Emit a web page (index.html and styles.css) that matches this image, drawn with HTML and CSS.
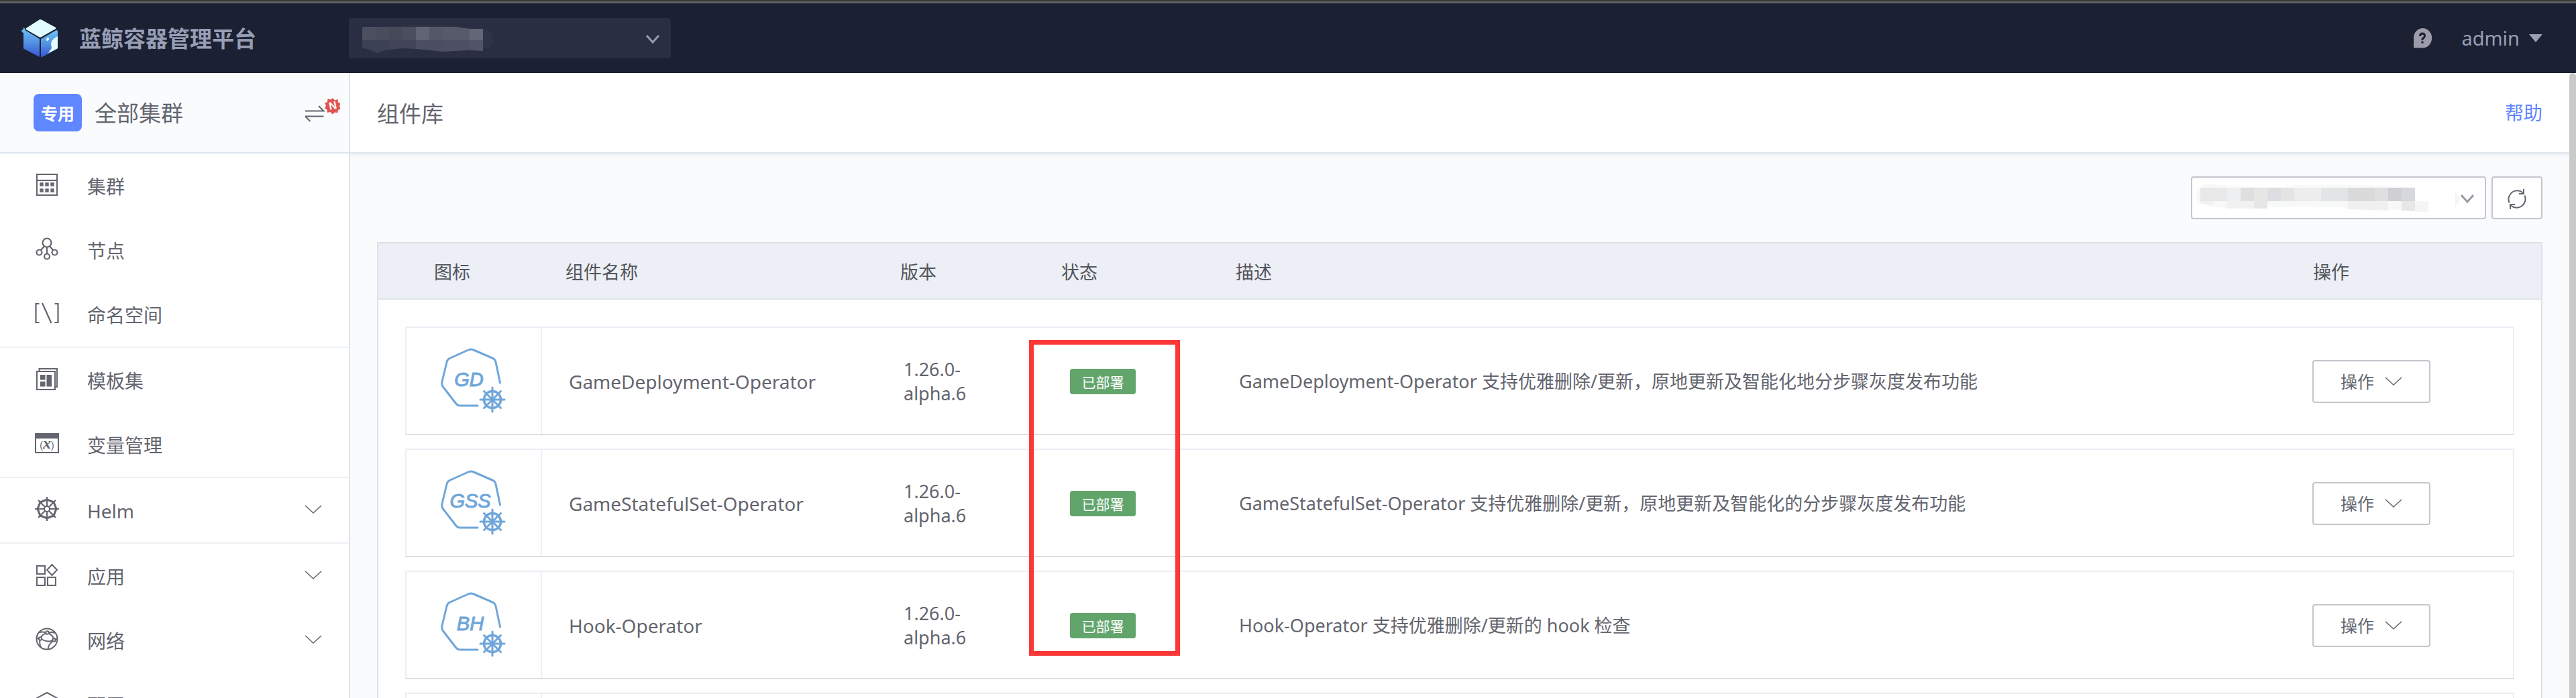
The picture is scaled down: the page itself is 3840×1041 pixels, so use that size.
FILE: index.html
```
<!DOCTYPE html>
<html lang="zh-CN">
<head>
<meta charset="utf-8">
<title>组件库</title>
<link rel="stylesheet" href="styles.css">
</head>
<body>
<svg class="defs" aria-hidden="true">
  <symbol id="chevron" viewBox="0 0 26 14"><path d="M1 1l12 11L25 1" fill="none" stroke="currentColor" stroke-width="1.500"/></symbol>
  <symbol id="arrow" viewBox="0 0 20 14"><path d="M1 1l9 10 9-10" fill="none" stroke="currentColor" stroke-width="3"/></symbol>
  <symbol id="operator" viewBox="0 0 100 100">
    <g fill="none" stroke="#6fa6da" stroke-linecap="round" stroke-linejoin="round">
      <path stroke-width="3" d="M89.500 53L83 22q-1-4-4-5.500L49 3.500q-3-1-6 0L14 16.500q-3 1.500-4 5.500L3 51q-1 5 1.500 8L23 83q3 4 7 4H56"/>
      <circle cx="78" cy="78" r="12.500" stroke-width="3.500"/>
      <path stroke-width="3" d="M78 60v36M60 78h36M65.500 65.500l25 25M90.500 65.500l-25 25"/>
    </g>
  </symbol>
</svg>

<header class="topbar">
  <div class="brand">
    <svg class="logo" viewBox="0 0 54 57" aria-hidden="true">
      <defs><linearGradient id="cube" x1="0" y1="0" x2="0" y2="1"><stop offset="0" stop-color="#6cc2f5"/><stop offset=".5" stop-color="#5493e4"/><stop offset="1" stop-color="#3555d2"/></linearGradient></defs>
      <path fill="#e1fbff" d="M28 0q1 0 2 .5L51 12q1 1 0 2L30 26q-2 1-4 0L7 15q-1-1 0-2L26.500.5Q27 0 28 0z"/>
      <path fill="url(#cube)" d="M0 16q3 0 3-4 2 0 2.500 4L27 29V56L4 44q-1 0-1-2V20q-3-1-3-4z"/>
      <path fill="url(#cube)" d="M29 29L52 16q2 0 2 2v24q0 1-1 2L31 56l-2 .5z"/>
      <path fill="#e1fbff" d="M54 25V43L39 51q3-2 3-5 2 0 3-4-3-8 3-13 2-2 6-4z"/>
      <ellipse cx="39" cy="29.500" rx="1.800" ry="2.600" transform="rotate(25 39 29.500)" fill="#fff"/>
    </svg>
    <h1 class="brand-name">蓝鲸容器管理平台</h1>
  </div>
  <div class="select project-select">
    <select aria-label="项目"><option></option></select>
    <svg class="mask project-mask" viewBox="0 0 200 44" aria-hidden="true">
      <path fill="#2e3346" d="M10 6Q100-4 150 4l42 6q8 20-4 26H20z"/>
      <g><path fill="#4b4f60" d="M0 4h20v20H0z"/><path fill="#484c5d" d="M20 4h20v20H20z"/><path fill="#454959" d="M40 4h20v20H40z"/><path fill="#4a4e5f" d="M60 4h20v20H60z"/><path fill="#5f6374" d="M80 4h20v20H80z"/><path fill="#535768" d="M100 4h20v20h-20z"/><path fill="#565a6b" d="M120 4h18l22 3v17h-40z"/><path fill="#626677" d="M160 7h20v17h-20z"/></g>
      <g><path fill="#3d4154" d="M0 24h40v14l-10 2-8 3-12-5-10-3z"/><path fill="#414557" d="M40 24h40v13l-20-1-20 2z"/><path fill="#4a4e60" d="M80 24h40v17l-40-4z"/><path fill="#4c5062" d="M120 24h40v15l-40 2z"/><path fill="#505466" d="M160 24h20v16l-20-1z"/></g>
    </svg>
    <svg class="arrow" aria-hidden="true"><use href="#arrow"/></svg>
  </div>
  <div class="user-area">
    <button class="plain" aria-label="帮助文档">
      <svg class="question" viewBox="0 0 28 30" aria-hidden="true"><path fill="#9b9ca8" d="M14 0a14 14.500 0 1 1 0 29.500H1V15A14 14.500 0 0 1 14 0z"/><path fill="none" stroke="#1b2032" stroke-width="3" d="M10.500 12q0-4 3.500-4t3.500 3.500q0 2-2 3.200T14 18M14 19.500v3"/></svg>
    </button>
    <button class="plain user">admin <svg class="caret" viewBox="0 0 20 12" aria-hidden="true"><path fill="currentColor" d="M0 0h20L10 12z"/></svg></button>
  </div>
</header>

<div class="layout">
  <aside class="sidebar">
    <div class="cluster">
      <span class="cluster-tag">专用</span>
      <span class="cluster-name">全部集群</span>
      <button class="plain swap" aria-label="切换集群">
        <svg viewBox="0 0 52 40" aria-hidden="true">
          <path fill="none" stroke="#63656e" stroke-width="2" d="M0 20.500h27.500L20 13M27.500 28.500H0L7.500 36"/>
          <path fill="#df5650" d="M41 1l3 3.500 4.500-1.500 .5 4.500 4 2-2 4 2 4-4 1.500-1 4.500-4-1-3.500 3-3-3.500-4.500 1-.5-4.500-3.500-2 2-4-2-3.500 4-2 .5-4.500 4.500 1z"/>
          <text x="41" y="18" text-anchor="middle" class="new-mark" transform="rotate(-12 41 12)">N</text>
        </svg>
      </button>
    </div>
    <nav>
      <ul class="menu">
        <li><a href="#"><svg class="icon" viewBox="0 0 36 36"><g fill="none" stroke="currentColor" stroke-width="2"><path d="M3 3h30v31H3zM3 12h30"/><path stroke-width="2.400" d="M8.500 16.500h3v3h-3zM16.500 16.500h3v3h-3zM24.500 16.500h3v3h-3zM8.500 25.500h3v3h-3zM16.500 25.500h3v3h-3zM24.500 25.500h3v3h-3z"/></g></svg>集群</a></li>
        <li><a href="#"><svg class="icon" viewBox="0 0 36 36"><g fill="none" stroke="currentColor" stroke-width="2.200"><circle cx="18" cy="9" r="6.500"/><circle cx="6.500" cy="23.500" r="4"/><circle cx="29.500" cy="23.500" r="4"/><circle cx="18" cy="29.500" r="4"/><path d="M14 14l-5 6M22 14l5 6M18 15.500v10"/></g></svg>节点</a></li>
        <li><a href="#"><svg class="icon" viewBox="0 0 36 36"><path fill="none" stroke="currentColor" stroke-width="2.200" d="M6.500 4H1.500v28h5M29.500 4h5v28h-5M11 3l13.500 30"/></svg>命名空间</a></li>
      </ul>
      <ul class="menu">
        <li><a href="#"><svg class="icon" viewBox="0 0 36 36"><g fill="none" stroke="currentColor" stroke-width="2"><path d="M3 7h27v27H3zM6.500 6V3H33v27h-3"/></g><path fill="currentColor" d="M8 12h7.500v7.500H8zM8 22h7.500v7.500H8zM17.500 12H25v17.500h-7.500z"/></svg>模板集</a></li>
        <li><a href="#"><svg class="icon" viewBox="0 0 36 36"><path fill="none" stroke="currentColor" stroke-width="2" d="M1 4h34v28H1z"/><path fill="currentColor" d="M1 3h34v8H1z"/><text x="18" y="26" text-anchor="middle" class="var-mark">(<tspan class="var-x">x</tspan>)</text></svg>变量管理</a></li>
      </ul>
      <ul class="menu">
        <li><a href="#"><svg class="icon" viewBox="0 0 36 36"><g fill="none" stroke="currentColor"><path stroke-width="3" d="M18 4l10 4 4 10-4 10-10 4-10-4L4 18 8 8z"/><circle cx="18" cy="18" r="4" stroke-width="2"/><path stroke-width="2.200" d="M18 0v14M18 22v14M0 18h14M22 18h14M5 5l10 10M21 21l10 10M31 5L21 15M15 21L5 31"/></g></svg>Helm<svg class="chevron"><use href="#chevron"/></svg></a></li>
      </ul>
      <ul class="menu">
        <li><a href="#"><svg class="icon" viewBox="0 0 36 36"><path fill="none" stroke="currentColor" stroke-width="2" d="M3 5h12v12H3zM3 22h12v12H3zM19 22h12v12H19zM25.500 3l7.500 8-7.500 8-7.500-8z"/></svg>应用<svg class="chevron"><use href="#chevron"/></svg></a></li>
        <li><a href="#"><svg class="icon" viewBox="0 0 36 36"><g fill="none" stroke="currentColor" stroke-width="2"><circle cx="18" cy="18" r="15.500"/><circle cx="18.500" cy="8.500" r="2.200"/><circle cx="8" cy="17.500" r="2.200"/><circle cx="28.500" cy="19.500" r="2.200"/><path d="M5 8.500q8-2 11 0M21 8.500q6-2 9 1M16.500 9.500Q11 11.500 9 15.500M20.500 9.500q6 3 7.500 8M10 18.500q8 4.500 16 2M7.500 19.500q-1 6 1.500 11M26.500 21.500q-6 4-7 11.500M3 17l3 .5M31 19l2-2"/></g></svg>网络<svg class="chevron"><use href="#chevron"/></svg></a></li>
        <li><a href="#"><svg class="icon" viewBox="0 0 36 36"><path fill="none" stroke="currentColor" stroke-width="2" d="M18 2l15 8v16l-15 8-15-8V10z"/></svg>配置<svg class="chevron"><use href="#chevron"/></svg></a></li>
      </ul>
    </nav>
  </aside>

  <main class="content">
    <div class="page-head">
      <h2>组件库</h2>
      <a class="help" href="#">帮助</a>
    </div>
    <div class="page-body">
      <div class="filters">
        <div class="select cluster-select">
          <select aria-label="所属集群"><option></option></select>
          <svg class="mask cluster-mask" viewBox="0 0 400 48" aria-hidden="true">
            <path fill="#f7f8f8" d="M2 28Q0 8 20 6q50 6 110 5l20-3q100-2 224 6l-3 1H340v30h-40l-90-4-80-1-60 3q-60-1-68-11z"/>
            <path fill="#e8e8e9" d="M8 12h40v20H8z"/><path fill="#eeeff0" d="M48 12h20v20H48z"/><path fill="#dfdfe0" d="M68 12h20v20H68z"/><path fill="#e6e6e6" d="M88 12h20v31H88z"/><path fill="#dddee2" d="M108 12h20v20h-20z"/><path fill="#e4e4e5" d="M128 12h20v20h-20z"/><path fill="#ededed" d="M148 12h40v20h-40z"/><path fill="#e3e4e5" d="M188 12h40v20h-40z"/><path fill="#dadadb" d="M228 12h40v20h-40z"/><path fill="#dfdfe0" d="M268 12h20v20h-20z"/><path fill="#cfcfd4" d="M288 12h20v20h-20z"/><path fill="#d7d8dd" d="M308 12h20v20h-20z"/><path fill="#fff" d="M328 12h72v20h-72z"/>
            <path fill="#f1f1f1" d="M8 32h20v6l-20-3zM48 32h40v11H48z"/><path fill="#f0f0f0" d="M228 32h60v14l-60-2z"/><path fill="#e7e7e7" d="M308 32h20v15l-20-1z"/><path fill="#f5f5f5" d="M328 32h20v16h-20z"/>
            <path fill="#f4f4f4" d="M388 17l7 12-7 12z"/>
          </svg>
          <svg class="arrow" aria-hidden="true"><use href="#arrow"/></svg>
        </div>
        <button class="refresh" aria-label="刷新">
          <svg viewBox="0 0 30 30" aria-hidden="true"><g fill="none" stroke="#63656e" stroke-width="2"><path d="M3.500 20.500A13 13 0 0 1 24 5.500M26.500 9.500A13 13 0 0 1 6 24.500"/><path d="M25 0v7h-7M5 30v-7h7"/></g></svg>
        </button>
      </div>

      <div class="table-wrap">
        <table class="components">
          <thead>
            <tr><th>图标</th><th>组件名称</th><th>版本</th><th class="status">状态</th><th>描述</th><th>操作</th></tr>
          </thead>
          <tbody>
            <tr>
              <td class="pic"><svg class="operator" viewBox="0 0 100 100"><use href="#operator"/><text x="43" y="58" text-anchor="middle">GD</text></svg></td>
              <td class="name">GameDeployment-Operator</td><td>1.26.0-alpha.6</td><td><span class="deployed">已部署</span></td>
              <td>GameDeployment-Operator 支持优雅删除/更新，原地更新及智能化地分步骤灰度发布功能</td>
              <td><button class="action">操作<svg class="chevron"><use href="#chevron"/></svg></button></td>
            </tr>
            <tr>
              <td class="pic"><svg class="operator" viewBox="0 0 100 100"><use href="#operator"/><text x="45" y="57" text-anchor="middle">GSS</text></svg></td>
              <td class="name">GameStatefulSet-Operator</td><td>1.26.0-alpha.6</td><td><span class="deployed">已部署</span></td>
              <td>GameStatefulSet-Operator 支持优雅删除/更新，原地更新及智能化的分步骤灰度发布功能</td>
              <td><button class="action">操作<svg class="chevron"><use href="#chevron"/></svg></button></td>
            </tr>
            <tr>
              <td class="pic"><svg class="operator" viewBox="0 0 100 100"><use href="#operator"/><text x="45" y="58" text-anchor="middle">BH</text></svg></td>
              <td class="name">Hook-Operator</td><td>1.26.0-alpha.6</td><td><span class="deployed">已部署</span></td>
              <td>Hook-Operator 支持优雅删除/更新的 hook 检查</td>
              <td><button class="action">操作<svg class="chevron"><use href="#chevron"/></svg></button></td>
            </tr>
            <tr><td class="pic"></td><td></td><td></td><td></td><td></td><td></td></tr>
          </tbody>
        </table>
        <div class="highlight"></div>
      </div>
    </div>
  </main>
  <div class="scrollbar"></div>
</div>
</body>
</html>
```
FILE: styles.css
```
* { box-sizing: border-box; }

body {
  margin: 0;
  height: 100vh;
  display: flex;
  flex-direction: column;
  overflow: hidden;
  background: #fafbfd;
  color: #63656e;
  font-family: "Noto Sans", "Noto Sans CJK SC", sans-serif;
  font-size: 28px;
  line-height: 36px;
}

h1, h2, ul { margin: 0; padding: 0; }
ul { list-style: none; }
a { color: inherit; text-decoration: none; }
button, select { font: inherit; color: inherit; }
svg { display: block; flex: none; }
.defs { position: absolute; width: 0; height: 0; }

.plain { border: 0; padding: 0; background: none; }

/* top bar */
.topbar {
  flex: none;
  display: flex;
  align-items: center;
  height: 109px;
  padding: 5px 50px 0 32px;
  background: linear-gradient(#38383a 2px, #606163 2px, #606163 5px, #1b2032 5px);
}
.brand { display: flex; align-items: center; gap: 32px; width: 488px; }
.logo { width: 54px; height: 57px; }
.brand-name { padding-top: 2px; color: #979eb5; font-size: 33px; line-height: 40px; font-weight: 700; }

.select { position: relative; display: flex; }
.select select {
  width: 100%;
  appearance: none;
  border: 0;
  border-radius: 4px;
  background: none;
}
.project-select { width: 480px; height: 60px; }
.project-select select { background: #292e42; }
.mask { position: absolute; left: 20px; top: 9px; pointer-events: none; }
.project-mask { width: 200px; height: 44px; }
.arrow {
  position: absolute;
  right: 17px;
  top: 25px;
  width: 20px;
  height: 14px;
  color: #979ba5;
  pointer-events: none;
}
.user-area { margin-left: auto; display: flex; align-items: center; gap: 44px; }
.question { width: 28px; height: 30px; }
.user { display: flex; align-items: center; gap: 14px; color: #979eb5; font-size: 29px; }
.caret { width: 20px; height: 12px; }

.layout { flex: 1; min-height: 0; display: flex; }

/* sidebar */
.sidebar {
  flex: none;
  width: 522px;
  overflow: hidden;
  border-right: 2px solid #dde4eb;
  background: #fff;
}
.cluster {
  display: flex;
  align-items: center;
  height: 120px;
  padding: 0 13px 0 50px;
  border-bottom: 2px solid #dde4eb;
  background: #fafbfd;
}
.cluster-tag {
  width: 72px;
  height: 56px;
  border-radius: 8px;
  background: #5f87ff;
  color: #fff;
  font-size: 25px;
  line-height: 58px;
  font-weight: 700;
  text-align: center;
}
.cluster-name { margin-left: 19px; padding-top: 2px; font-size: 33px; line-height: 40px; }
.swap { margin-left: auto; padding-bottom: 6px; }
.swap svg { width: 52px; height: 40px; }
.new-mark { font: 700 16px "Liberation Sans", sans-serif; fill: #fff; }

.menu + .menu { border-top: 2px solid #eef0f5; }
.menu a { display: flex; align-items: center; height: 96px; padding: 2px 40px 0 52px; }
.icon { width: 36px; height: 36px; margin: 0 42px 6px 0; }
.var-mark { font: 14px "Liberation Sans", sans-serif; fill: currentColor; }
.var-x { font: italic 700 24px "Liberation Serif", serif; }
.chevron { width: 26px; height: 14px; margin-left: auto; }
.menu .chevron { margin-bottom: 4px; }

/* content */
.content { flex: 1; min-width: 0; overflow: hidden; }
.page-head {
  display: flex;
  align-items: center;
  justify-content: space-between;
  height: 120px;
  padding: 0 40px;
  border-bottom: 2px solid #dde4eb;
  background: #fff;
  box-shadow: 0 2px 8px rgba(0, 0, 0, .06);
}
.page-head h2 { padding-top: 4px; font-size: 33px; line-height: 40px; font-weight: 400; }
.help { color: #5f87ff; }
.page-body { padding: 34px 40px; }

.filters { display: flex; justify-content: flex-end; gap: 8px; margin-bottom: 34px; }
.cluster-select { width: 440px; height: 64px; }
.cluster-select select { border: 2px solid #c4c6cc; background: #fff; }
.cluster-select .mask { left: 6px; top: 5px; width: 400px; height: 48px; }
.cluster-select .arrow { right: 18px; top: 27px; }
.refresh {
  display: flex;
  align-items: center;
  justify-content: center;
  width: 76px;
  height: 64px;
  padding: 4px 0 0;
  border: 2px solid #c4c6cc;
  border-radius: 4px;
  background: #fff;
}
.refresh svg { width: 30px; height: 30px; }

.table-wrap { position: relative; border: 2px solid #dde0e6; background: #fff; }
.components, .components thead { display: block; font-size: 27px; }
.components tr {
  display: grid;
  grid-template-columns: 202px 499fr 248fr 252fr 1600fr 339fr;
  align-items: center;
}
.components thead tr {
  height: 84px;
  padding: 0 42px;
  border-bottom: 2px solid #e2e4e8;
  background: #eceff5;
  color: #53555c;
}
.components th { padding: 4px 0 0 35px; font-weight: 400; text-align: left; }
.components th:first-child, .components th:last-child { padding-left: 41px; }
.components th.status { padding-left: 27px; }
.components tbody { display: grid; gap: 20px; padding: 40px 40px 0; }
.components tbody tr {
  height: 162px;
  border: 2px solid #ebeff5;
  border-bottom-color: #dcdee5;
}
.components td { padding: 2px 38px 0 40px; }
.components .name { font-size: 28px; }
.components .pic {
  display: flex;
  align-items: center;
  justify-content: center;
  height: 100%;
  padding: 0;
  border-right: 2px solid #ebeff5;
}
.operator { width: 100px; height: 100px; }
.operator text {
  font: italic 29px "Liberation Sans", sans-serif;
  fill: #6fa6da;
  stroke: #6fa6da;
  stroke-width: 1px;
}
.deployed {
  display: block;
  width: 98px;
  height: 38px;
  border-radius: 4px;
  background: #62a56b;
  color: #fff;
  font-size: 21px;
  line-height: 40px;
  text-align: center;
}
.action {
  display: flex;
  align-items: center;
  width: 176px;
  height: 64px;
  padding: 0 40px;
  border: 2px solid #c4c6cc;
  border-radius: 4px;
  background: #fff;
  font-size: 25px;
}

/* marks the status column of the deployed components */
.highlight {
  position: absolute;
  left: 970px;
  top: 144px;
  width: 225px;
  height: 471px;
  border: 7px solid #fb3737;
  pointer-events: none;
}

.scrollbar { flex: none; width: 10px; border-radius: 5px 5px 0 0; background: #c9c9c9; }
```
